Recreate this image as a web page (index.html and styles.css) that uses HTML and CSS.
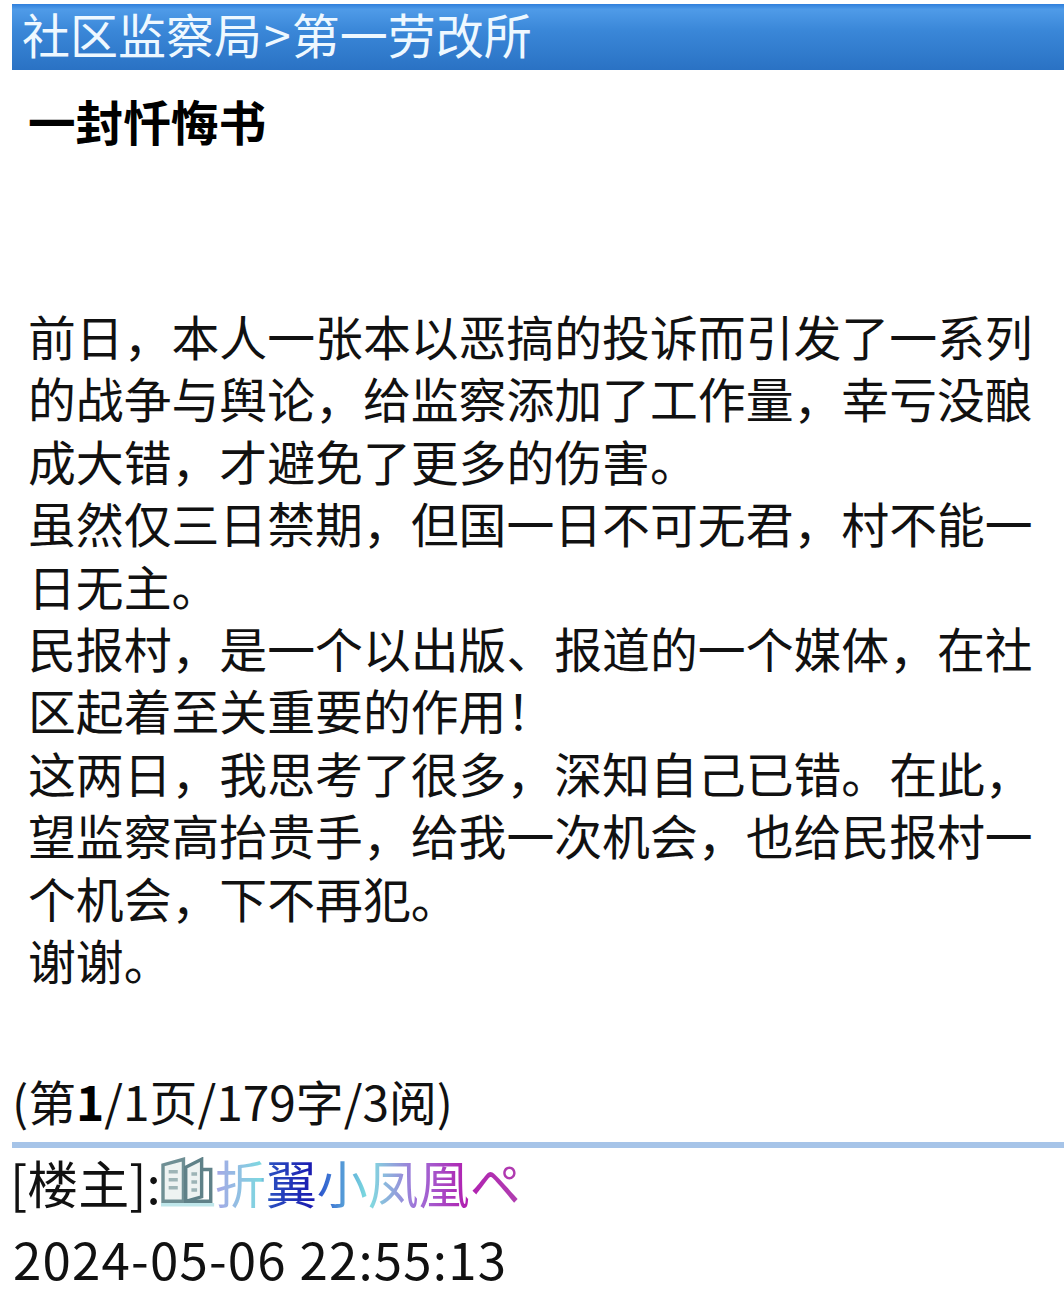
FILE: index.html
```html
<!DOCTYPE html>
<html lang="zh-CN">

<head>
  <meta charset="utf-8">
  <title>一封忏悔书</title>
  <link rel="stylesheet" href="styles.css">
</head>

<body>
<div class="title">社区监察局<span class="sep">&gt;</span>第一劳改所</div>

<div class="content">
  <h1>一封忏悔书</h1>
  <div class="text">
    前日，本人一张本以恶搞的投诉而引发了一系列的战争与舆论，给监察添加了工作量，幸亏没酿成大错，才避免了更多的伤害。<br>
    虽然仅三日禁期，但国一日不可无君，村不能一日无主。<br>
    民报村，是一个以出版、报道的一个媒体，在社区起着至关重要的作用！<br>
    这两日，我思考了很多，深知自己已错。在此，<br>
    望监察高抬贵手，给我一次机会，也给民报村一个机会，下不再犯。<br>
    谢谢。
  </div>
</div>

<div class="pageinfo">(第<b>1</b>/1页/179字/3阅)</div>

<div class="footer">
  <div class="author">[楼主]:<svg class="book" viewBox="3 3 46 44" width="54" height="50">
      <path d="M4 42 V10 L22 5 V42 Z" fill="#eef3f2" stroke="#6f8f94" stroke-width="3"/>
      <path d="M24 42 V12 L38 5 V38 Z" fill="#eef3f2" stroke="#5f8188" stroke-width="3"/>
      <path d="M38 14 H46 V42 H24" fill="none" stroke="#5f8188" stroke-width="3"/>
      <path d="M9 16 H17 M9 23 H17 M9 30 H17 M29 18 H34 M29 25 H34 M29 32 H34" stroke="#9db4b6" stroke-width="3"/>
      <path d="M1 45 H49" stroke="#bfe6ea" stroke-width="3"/>
    </svg><span class="nick">折翼小凤凰ペ</span></div>
  <div class="time">2024-05-06 22:55:13</div>
</div>
</body>

</html>
```

FILE: styles.css
```css
body { background: white; color: #111; font-family: "Noto Sans CJK SC", sans-serif; font-size: 47.85px; margin: 0; padding: 4px 0 0 12px; height: 1296px; overflow: hidden }
h1 { font-size: 47.6px; font-weight: bold; line-height: 62px; margin: 0 0 152px; color: #000 }
div.title { background: linear-gradient(#2f7fdc 0, #4f9be8 8%, #3a87d8 40%, #2a72c4 100%); color: #eef8ff; font-size: 48px; height: 66px; line-height: 58px; padding-left: 10px; white-space: nowrap }
span.sep { margin: 0 1px 0 2px }
div.content { padding: 20px 14px 0 16px }
div.text { line-height: 62.4px }
div.pageinfo { line-height: 62px; margin-top: 79px }
div.pageinfo b { color: #000 }
div.footer { border-top: 6px solid #a6c4e8; margin-top: 11px; font-size: 51px }
div.author { align-items: center; display: flex; height: 68px; margin: 0 0 2px -2px; white-space: nowrap }
svg.book { filter: blur(0.7px); flex: none }
span.nick { background: linear-gradient(90deg, #a6a6e6 0, #7dd8e0 15%, #2a4fc0 18%, #1a1ab0 32%, #3060d0 35%, #80e0e0 50%, #a070d8 66%, #b020b0 82%, #b040b0 100%); -webkit-background-clip: text; background-clip: text; color: transparent }
div.time { letter-spacing: 1.2px; line-height: 80px; margin-left: 1px }
```
